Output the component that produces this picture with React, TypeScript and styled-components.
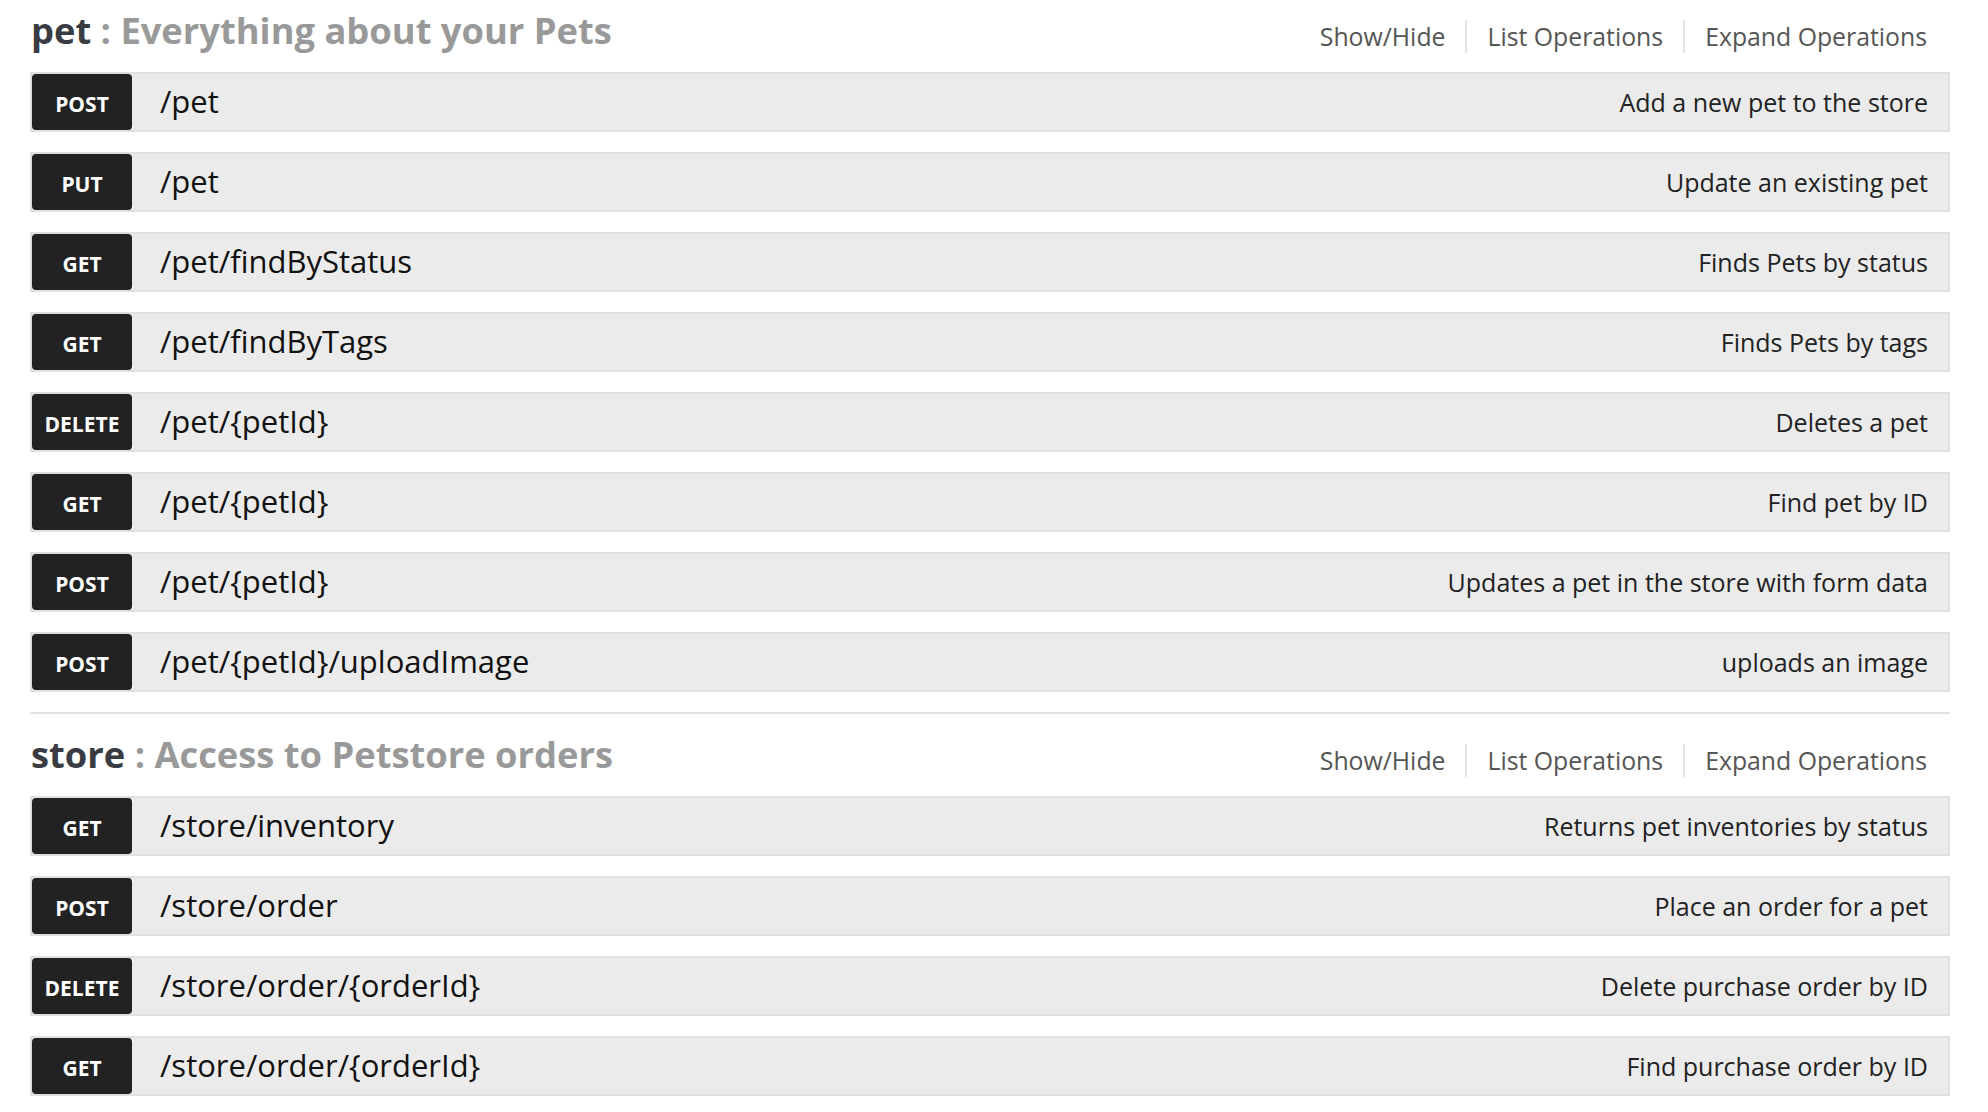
import { FC } from 'react';
import styled, { createGlobalStyle } from 'styled-components';

type Method = 'GET' | 'POST' | 'PUT' | 'DELETE';

/**
 * Single API operation.
 */
interface IOperation {
  method: Method;
  path: string;
  summary: string;
}

/**
 * Group of operations under one resource.
 */
interface IResource {
  name: string;
  description: string;
  operations: IOperation[];
}

const RESOURCES: IResource[] = [
  {
    name: 'pet',
    description: 'Everything about your Pets',
    operations: [
      { method: 'POST', path: '/pet', summary: 'Add a new pet to the store' },
      { method: 'PUT', path: '/pet', summary: 'Update an existing pet' },
      { method: 'GET', path: '/pet/findByStatus', summary: 'Finds Pets by status' },
      { method: 'GET', path: '/pet/findByTags', summary: 'Finds Pets by tags' },
      { method: 'DELETE', path: '/pet/{petId}', summary: 'Deletes a pet' },
      { method: 'GET', path: '/pet/{petId}', summary: 'Find pet by ID' },
      {
        method: 'POST',
        path: '/pet/{petId}',
        summary: 'Updates a pet in the store with form data',
      },
      { method: 'POST', path: '/pet/{petId}/uploadImage', summary: 'uploads an image' },
    ],
  },
  {
    name: 'store',
    description: 'Access to Petstore orders',
    operations: [
      {
        method: 'GET',
        path: '/store/inventory',
        summary: 'Returns pet inventories by status',
      },
      { method: 'POST', path: '/store/order', summary: 'Place an order for a pet' },
      {
        method: 'DELETE',
        path: '/store/order/{orderId}',
        summary: 'Delete purchase order by ID',
      },
      {
        method: 'GET',
        path: '/store/order/{orderId}',
        summary: 'Find purchase order by ID',
      },
    ],
  },
];

const NAV_LINKS = ['Show/Hide', 'List Operations', 'Expand Operations'];

/**
 * Renders one operation row.
 */
const UiOperation: FC<IOperation> = ({ method, path, summary }) => (
  <SOperation>
    <SMethod>{method}</SMethod>
    <SPath>{path}</SPath>
    <SSummary>{summary}</SSummary>
  </SOperation>
);

/**
 * Renders a resource with its heading and operations.
 */
const UiResource: FC<IResource> = ({ name, description, operations }) => (
  <SResource>
    <SHeader>
      <STitle>
        {name}
        <STitleDescription> : {description}</STitleDescription>
      </STitle>

      <SNav>
        {NAV_LINKS.map((link) => (
          <SNavLink key={link}>{link}</SNavLink>
        ))}
      </SNav>
    </SHeader>

    <SOperations>
      {operations.map((op, i) => (
        <UiOperation key={i} {...op} />
      ))}
    </SOperations>
  </SResource>
);

const App: FC = () => (
  <>
    <GlobalStyle />
    <SPage>
      {RESOURCES.map((res) => (
        <UiResource key={res.name} {...res} />
      ))}
    </SPage>
  </>
);

export default App;

const GlobalStyle = createGlobalStyle`
  html, body {
    margin: 0;
    background: #fff;
  }

  body {
    font-family: 'Open Sans', 'Noto Sans', sans-serif;
  }
`;

const SPage = styled.main`
  width: 1920px;
  margin-left: 30px;
`;

const SResource = styled.section`
  padding-bottom: 20px;
  border-bottom: 2px solid #e1e1e1;

  & + & {
    padding-top: 10px;
  }
`;

const SHeader = styled.header`
  display: flex;
  align-items: flex-start;
  justify-content: space-between;
  box-sizing: border-box;
  height: 72px;
  padding: 0 23px 0 1px;
`;

const STitle = styled.h2`
  margin: 9px 0 0;
  font-size: 36.3px;
  line-height: 42px;
  font-weight: 700;
  color: #393c43;
`;

const STitleDescription = styled.span`
  color: #999;
`;

const SNav = styled.nav`
  display: flex;
  margin-top: 20px;
`;

const SNavLink = styled.span`
  padding: 0 20px;
  font-size: 24.8px;
  line-height: 33px;
  color: #555;

  & + & {
    border-left: 2px solid #e4e4e4;
  }

  &:last-child {
    padding-right: 0;
  }
`;

const SOperations = styled.div`
  display: flex;
  flex-direction: column;
  gap: 20px;
`;

const SOperation = styled.div`
  display: flex;
  align-items: center;
  box-sizing: border-box;
  height: 60px;
  border: 2px solid #dde1e5;
  background: #ebebeb;
`;

const SMethod = styled.span`
  display: flex;
  align-items: center;
  justify-content: center;
  flex: none;
  align-self: stretch;
  width: 100px;
  padding-top: 4px;
  box-sizing: border-box;
  border-radius: 4px;
  background: #222;
  color: #fff;
  font-size: 21px;
  font-weight: 700;
`;

const SPath = styled.span`
  padding: 0 0 3px 28px;
  font-size: 31px;
  color: #111;
`;

const SSummary = styled.span`
  margin-left: auto;
  padding-right: 20px;
  font-size: 25px;
  color: #222;
`;
